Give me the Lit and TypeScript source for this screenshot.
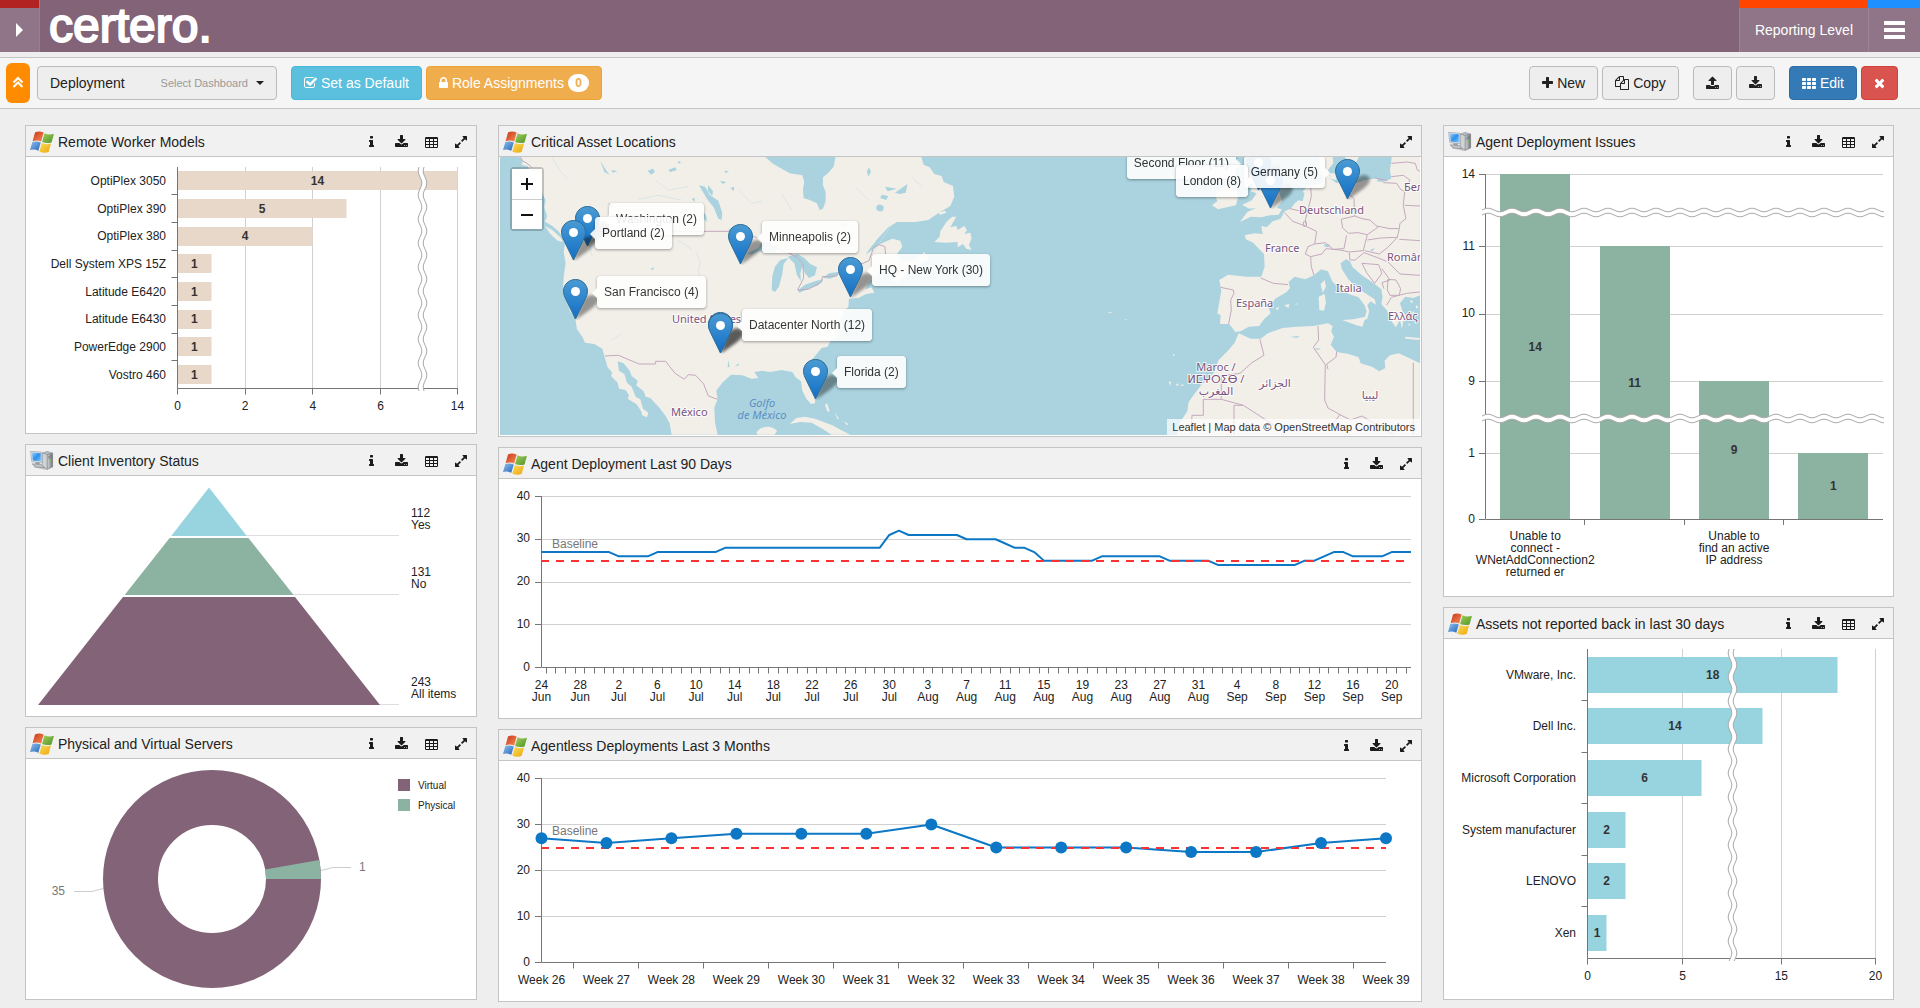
import { LitElement, html, svg, css, nothing } from "lit";
import { customElement, property } from "lit/decorators.js";

type Point = [number, number];

/* ---------- icons: [viewBox x, viewBox width, path] on a 1792 grid ---------- */
const ICONS: Record<string, [number, number, string]> = {
  plus: [192, 1408, "M1600 736v192q0 40-28 68t-68 28h-416v416q0 40-28 68t-68 28h-192q-40 0-68-28t-28-68v-416h-416q-40 0-68-28t-28-68v-192q0-40 28-68t68-28h416v-416q0-40 28-68t68-28h192q40 0 68 28t28 68v416h416q40 0 68 28t28 68z"],
  lock: [320, 1152, "M640 768h512v-192q0-106-75-181t-181-75-181 75-75 181v192zm832 96v576q0 40-28 68t-68 28h-960q-40 0-68-28t-28-68v-576q0-40 28-68t68-28h32v-192q0-184 132-316t316-132 316 132 132 316v192h32q40 0 68 28t28 68z"],
  close: [192, 1408, "M1490 1322q0 40-28 68l-136 136q-28 28-68 28t-68-28l-294-294-294 294q-28 28-68 28t-68-28l-136-136q-28-28-28-68t28-68l294-294-294-294q-28-28-28-68t28-68l136-136q28-28 68-28t68 28l294 294 294-294q28-28 68-28t68 28l136 136q28 28 28 68t-28 68l-294 294 294 294q28 28 28 68z"],
  info: [576, 640, "M1216 1344v128q0 26-19 45t-45 19h-512q-26 0-45-19t-19-45v-128q0-26 19-45t45-19h64v-384h-64q-26 0-45-19t-19-45v-128q0-26 19-45t45-19h384q26 0 45 19t19 45v576h64q26 0 45 19t19 45zm-128-1152v192q0 26-19 45t-45 19h-256q-26 0-45-19t-19-45v-192q0-26 19-45t45-19h256q26 0 45 19t19 45z"],
  download: [64, 1664, "M1344 1344q0-26-19-45t-45-19-45 19-19 45 19 45 45 19 45-19 19-45zm256 0q0-26-19-45t-45-19-45 19-19 45 19 45 45 19 45-19 19-45zm128-224v320q0 40-28 68t-68 28h-1472q-40 0-68-28t-28-68v-320q0-40 28-68t68-28h465l135 136q58 56 136 56t136-56l136-136h464q40 0 68 28t28 68zm-325-569q17 41-14 70l-448 448q-18 19-45 19t-45-19l-448-448q-31-29-14-70 17-39 59-39h256v-448q0-26 19-45t45-19h256q26 0 45 19t19 45v448h256q42 0 59 39z"],
  upload: [64, 1664, "M1344 1472q0-26-19-45t-45-19-45 19-19 45 19 45 45 19 45-19 19-45zm256 0q0-26-19-45t-45-19-45 19-19 45 19 45 45 19 45-19 19-45zm128-224v320q0 40-28 68t-68 28h-1472q-40 0-68-28t-28-68v-320q0-40 28-68t68-28h427q21 56 70.5 92t110.5 36h256q61 0 110.5-36t70.5-92h427q40 0 68 28t28 68zm-325-648q-17 40-59 40h-256v448q0 26-19 45t-45 19h-256q-26 0-45-19t-19-45v-448h-256q-42 0-59-40-17-39 14-69l448-448q18-19 45-19t45 19l448 448q31 30 14 69z"],
  table: [64, 1664, "M224 256h1344q160 0 160 160v1088q0 160-160 160h-1344q-160 0-160-160v-1088q0-160 160-160zM192 512v256h384v-256zM704 512v256h384v-256zM1216 512v256h384v-256zM192 896v256h384v-256zM704 896v256h384v-256zM1216 896v256h384v-256zM192 1280v256h384v-256zM704 1280v256h384v-256zM1216 1280v256h384v-256z"],
  grid: [0, 1792, "M96 256h320q96 0 96 96v192q0 96-96 96h-320q-96 0-96-96v-192q0-96 96-96zM736 256h320q96 0 96 96v192q0 96-96 96h-320q-96 0-96-96v-192q0-96 96-96zM1376 256h320q96 0 96 96v192q0 96-96 96h-320q-96 0-96-96v-192q0-96 96-96zM96 768h320q96 0 96 96v192q0 96-96 96h-320q-96 0-96-96v-192q0-96 96-96zM736 768h320q96 0 96 96v192q0 96-96 96h-320q-96 0-96-96v-192q0-96 96-96zM1376 768h320q96 0 96 96v192q0 96-96 96h-320q-96 0-96-96v-192q0-96 96-96zM96 1280h320q96 0 96 96v192q0 96-96 96h-320q-96 0-96-96v-192q0-96 96-96zM736 1280h320q96 0 96 96v192q0 96-96 96h-320q-96 0-96-96v-192q0-96 96-96zM1376 1280h320q96 0 96 96v192q0 96-96 96h-320q-96 0-96-96v-192q0-96 96-96z"],
  expand: [128, 1536, "M883 1056q0 13-10 23l-332 332 144 144q19 19 19 45t-19 45-45 19h-448q-26 0-45-19t-19-45v-448q0-26 19-45t45-19 45 19l144 144 332-332q10-10 23-10t23 10l114 114q10 10 10 23zm781-864v448q0 26-19 45t-45 19-45-19l-144-144-332 332q-10 10-23 10t-23-10l-114-114q-10-10-10-23t10-23l332-332-144-144q-19-19-19-45t19-45 45-19h448q26 0 45 19t19 45z"],
  check: [64, 1664, "M1472 930v318q0 119-84.5 203.5t-203.5 84.5h-832q-119 0-203.5-84.5t-84.5-203.5v-832q0-119 84.5-203.5t203.5-84.5h832q63 0 117 25 15 7 18 23 3 17-9 29l-49 49q-10 10-23 10-3 0-9-2-23-6-45-6h-832q-66 0-113 47t-47 113v832q0 66 47 113t113 47h832q66 0 113-47t47-113v-254q0-13 9-22l64-64q10-10 23-10 6 0 12 3 20 8 20 29zm231-489l-814 814q-24 24-57 24t-57-24l-430-430q-24-24-24-57t24-57l110-110q24-24 57-24t57 24l263 263 647-647q24-24 57-24t57 24l110 110q24 24 24 57t-24 57z"],
  copy: [0, 1792, "M1696 384q40 0 68 28t28 68v1216q0 40-28 68t-68 28h-960q-40 0-68-28t-28-68v-288h-544q-40 0-68-28t-28-68v-672q0-40 20-88t48-76l408-408q28-28 76-48t88-20h416q40 0 68 28t28 68v328q68-40 128-40h416zm-544 213l-299 299h299v-299zm-640-384l-299 299h299v-299zm196 647l316-316v-416h-384v416q0 40-28 68t-68 28h-416v640h512v-256q0-40 20-88t48-76zm956 804v-1152h-384v416q0 40-28 68t-68 28h-416v640h896z"],
};

const icon = (name: string, size = 14) => {
  const [x, w, d] = ICONS[name];
  return html`<svg aria-hidden="true" height=${size} width=${Math.round((w * size) / 1792)} viewBox="${x} 0 ${w} 1792">
    <path d=${d} fill="currentColor" fill-rule="evenodd"></path>
  </svg>`;
};

const windowsLogo = html`<svg aria-hidden="true" width="24" height="22" viewBox="0 0 24 22">
  <defs>
    <linearGradient id="r" x2="1" y2="1"><stop stop-color="#c8371b" /><stop offset="1" stop-color="#f58a54" /></linearGradient>
    <linearGradient id="g" x2="1" y2="1"><stop stop-color="#a3cf5c" /><stop offset="1" stop-color="#4f9427" /></linearGradient>
    <linearGradient id="b" x2="1" y2="1"><stop stop-color="#8fc0ee" /><stop offset="1" stop-color="#2767b8" /></linearGradient>
    <linearGradient id="y" x2="1" y2="1"><stop stop-color="#f9dc5a" /><stop offset="1" stop-color="#eda70c" /></linearGradient>
  </defs>
  <path fill="url(#r)" d="M5 1.5Q9-.7 13.6 1.6L11.2 10.6Q7 8.6 2.6 10.2z" />
  <path fill="url(#g)" d="M14.5 2.3Q19 4.6 24 2.8L21.5 11.4Q17 12.8 12.1 11z" />
  <path fill="url(#b)" d="M2.3 11.1Q6.5 9.6 10.8 11.6L8.3 19.8Q4.5 17.8 0 19z" />
  <path fill="url(#y)" d="M11.9 12.1Q16 14 21 12.6L18.6 21Q14 22.6 9.3 20.5z" />
</svg>`;

const computerLogo = html`<svg aria-hidden="true" width="24" height="22" viewBox="0 0 24 22">
  <defs>
    <linearGradient id="s" x2="1" y2="1"><stop stop-color="#9bd0fa" /><stop offset=".5" stop-color="#2f8fea" /><stop offset="1" stop-color="#7cc4f8" /></linearGradient>
    <linearGradient id="t" x2="1"><stop stop-color="#d5d8da" /><stop offset=".5" stop-color="#a5a9ac" /><stop offset="1" stop-color="#6b6f73" /></linearGradient>
  </defs>
  <path fill="#777" opacity=".35" d="M3 17l13 3 7-2.500v-2z" />
  <path fill="#b9bdc1" stroke="#8b9095" stroke-width=".6" d="M12.300 3L17 1.400 22.500 3 17.500 4.400z" />
  <path fill="#d0d3d6" stroke="#8b9095" stroke-width=".6" d="M12.300 3.200L17.300 4.600V19.200L12.300 16.600z" />
  <path fill="url(#t)" stroke="#74787c" stroke-width=".6" d="M17.300 4.600L22.600 3.200V16.600L17.300 19.200z" />
  <path fill="none" stroke="#5f6468" stroke-width=".7" d="M18.200 6.500l3.400-.9M18.200 8.300l3.400-.9" />
  <circle cx="20" cy="10.500" r=".9" fill="#6fd03a" />
  <path fill="#e3e6e9" stroke="#8f959a" stroke-width=".6" d="M.6 1.400L11.800 2.200V12.800L1.800 11.600z" />
  <path fill="url(#s)" d="M1.800 2.600l9 .6v8.300L2.800 10.600z" />
  <path fill="#9aa0a5" d="M5 12.200h4l1.300 2H5.600z" />
  <path fill="#c0c4c8" stroke="#7d8287" stroke-width=".6" d="M2.200 13.800l9.200.9 3.400 3.100-9.800-.8z" />
</svg>`;

/* ---------- dashboard panel ---------- */
@customElement("widget-card")
class WidgetCard extends LitElement {
  @property() heading = "";
  @property() logo = "windows";
  @property({ type: Array }) actions: string[] = ["info", "download", "table", "expand"];

  static styles = css`
    :host { display: block; background: #fff; border: 1px solid #c4c4c4; }
    .head { display: flex; align-items: center; height: 28px; padding: 2px 0 0 4px; background: #f1f1f1; border-bottom: 1px solid #c4c4c4; }
    .head > svg { flex: none; }
    h2 { flex: 1; margin: 0 0 0 4px; font-size: 14px; font-weight: 400; line-height: 20px; white-space: nowrap; }
    button { display: flex; align-items: center; justify-content: center; width: 30px; height: 28px; padding: 0; border: 0; background: none; color: #1b1b1b; cursor: pointer; }
  `;

  render() {
    return html`
      <div class="head">
        ${this.logo === "windows" ? windowsLogo : computerLogo}
        <h2>${this.heading}</h2>
        ${this.actions.map((a) => html`<button type="button" aria-label=${a}>${icon(a)}</button>`)}
      </div>
      <slot></slot>
    `;
  }
}

/* ---------- chart helpers ---------- */
const scale = (stops: Point[]) => (v: number) => {
  let i = 1;
  while (i < stops.length - 1 && v > stops[i][0]) i++;
  const [v0, p0] = stops[i - 1];
  const [v1, p1] = stops[i];
  return p0 + ((v - v0) / (v1 - v0)) * (p1 - p0);
};

const crisp = (n: number) => Math.floor(n) + 0.5;

/* Two parallel wavy lines with a blank ribbon between them, marking an axis break. */
const axisBreak = (from: number, to: number, at: number, peak: number, vertical: boolean) => {
  const wave = (offset: number): Point[] => {
    const pts: Point[] = [];
    for (let t = from; t <= to; t += 2) {
      const d = at + offset - 1.8 * Math.cos((2 * Math.PI * (t - peak)) / 24);
      pts.push(vertical ? [d, t] : [t, d]);
    }
    return pts;
  };
  const a = wave(0);
  const b = wave(5);
  return svg`
    <polygon points=${[...a, ...[...b].reverse()].join(" ")} fill="#fff"></polygon>
    <polyline points=${a.join(" ")} class="wave"></polyline>
    <polyline points=${b.join(" ")} class="wave"></polyline>`;
};

interface BarSpec {
  height: number;
  bottom: number;
  bar: number;
  color: string;
  stops: Point[];
  ticks: number[];
  breakAt: number;
  rows: [string, number][];
}

const horizontalBars = (s: BarSpec, width: number, label: string) => {
  const x = scale(s.stops);
  const x0 = s.stops[0][1];
  const top = 10;
  const step = (s.bottom - top) / s.rows.length;
  const end = x(s.ticks[s.ticks.length - 1]);
  return html`<svg class="chart" role="img" aria-label=${label} viewBox="0 0 ${width} ${s.height}">
    ${s.ticks.slice(1).map((t) => svg`<path class="grid" d="M${crisp(x(t))} ${top}V${s.bottom}"></path>`)}
    ${s.rows.map(([, v], i) => svg`<rect x=${x0} y=${Math.round(top + step * (i + 0.5) - s.bar / 2)} width=${Math.round(x(v) - x0)} height=${s.bar} fill=${s.color}></rect>`)}
    <path class="axis" d="M${x0} ${top}V${s.bottom}H${end + 0.5}"></path>
    ${s.ticks.map((t) => svg`<path class="axis" d="M${crisp(x(t))} ${s.bottom}v6"></path><text class="mid" x=${x(t)} y=${s.bottom + 21.5}>${t}</text>`)}
    ${s.rows.slice(1).map((_, i) => svg`<path class="axis" d="M${x0} ${crisp(top + step * (i + 1))}h-6"></path>`)}
    ${axisBreak(top, s.bottom + 4, s.breakAt, 14, true)}
    ${s.rows.map(([name, v], i) => {
      const y = Math.round(top + step * (i + 0.5)) + 4;
      return svg`<text class="end" x=${x0 - 11.5} y=${y}>${name}</text><text class="value" x=${(x0 + x(v)) / 2} y=${y}>${v}</text>`;
    })}
  </svg>`;
};

const MODELS: BarSpec = {
  height: 276, bottom: 231.5, bar: 19, color: "#e8d8c9", breakAt: 394,
  stops: [[0, 151.5], [6, 354.5], [14, 431.5]],
  ticks: [0, 2, 4, 6, 14],
  rows: [["OptiPlex 3050", 14], ["OptiPlex 390", 5], ["OptiPlex 380", 4], ["Dell System XPS 15Z", 1], ["Latitude E6420", 1], ["Latitude E6430", 1], ["PowerEdge 2900", 1], ["Vostro 460", 1]],
};

const ASSETS: BarSpec = {
  height: 360, bottom: 319.5, bar: 36, color: "#98d3e0", breakAt: 286,
  stops: [[0, 143.5], [6, 257.5], [14, 318.5], [20, 431.5]],
  ticks: [0, 5, 15, 20],
  rows: [["VMware, Inc.", 18], ["Dell Inc.", 14], ["Microsoft Corporation", 6], ["System manufacturer", 2], ["LENOVO", 2], ["Xen", 1]],
};

const issuesChart = () => {
  const y = scale([[0, 362.5], [1, 296.5], [9, 224.5], [11, 89.5], [14, 17.5]]);
  const bars: [number, string[]][] = [
    [14, ["Unable to", "connect -", "WNetAddConnection2", "returned er"]],
    [11, []],
    [9, ["Unable to", "find an active", "IP address"]],
    [1, []],
  ];
  const x = (i: number) => 41.5 + 99.4 * (i + 0.5);
  return html`<svg class="chart" role="img" aria-label="Agent Deployment Issues" viewBox="0 0 449 439">
    ${[14, 11, 10, 9, 1].map((v) => svg`<path class="grid" d="M41 ${crisp(y(v))}H439"></path>`)}
    ${bars.map(([v], i) => svg`<rect x=${Math.round(x(i) - 35)} y=${Math.floor(y(v))} width="70" height=${362 - Math.floor(y(v))} fill="#8cb2a1"></rect>`)}
    <path class="axis" d="M41.5 17V362.5H439"></path>
    ${[14, 11, 10, 9, 1, 0].map((v) => svg`<path class="axis" d="M35 ${crisp(y(v))}h6"></path><text class="end" x="31" y=${Math.round(y(v)) + 3}>${v}</text>`)}
    ${[1, 2, 3].map((i) => svg`<path class="axis" d="M${crisp(x(i) - 49.7)} 362v6"></path>`)}
    ${axisBreak(38, 440, 53, 44, false)}
    ${axisBreak(38, 440, 259, 44, false)}
    ${bars.map(([v, lines], i) => svg`
      <text class="value" x=${x(i)} y=${Math.round((y(v) + 362) / 2) + 4}>${v}</text>
      ${lines.map((l, n) => svg`<text class="mid" x=${x(i)} y=${383 + 12 * n}>${l}</text>`)}`)}
  </svg>`;
};

const DAILY: Point[] = [
  [0, 27], [7, 27], [8, 26], [11, 26], [12, 27], [18, 27], [19, 28], [35, 28], [36, 31], [37, 32], [38, 31], [43, 31],
  [44, 30], [47, 30], [48, 29], [49, 28], [50, 28], [51, 27], [52, 25], [57, 25], [58, 26], [64, 26], [65, 25], [69, 25],
  [70, 24], [78, 24], [79, 25], [80, 25], [81, 26], [82, 27], [83, 27], [84, 26], [87, 26], [88, 27], [90, 27],
];
const WEEKLY = [27, 26, 27, 28, 28, 28, 30, 25, 25, 25, 24, 24, 26, 27];

interface LineSpec {
  label: string;
  height: number;
  bottom: number;
  right: number;
  count: number;
  points: Point[];
  dots: boolean;
  names: [number, string[]][];
}

const lineChart = (s: LineSpec) => {
  const y = scale([[0, s.bottom], [40, 17.5]]);
  const step = (s.right - 42.5) / (s.count - 1);
  const x = (i: number) => 42.5 + step * i;
  return html`<svg class="chart" role="img" aria-label=${s.label} viewBox="0 0 922 ${s.height}">
    ${[10, 20, 30, 40].map((v) => svg`<path class="grid" d="M42 ${crisp(y(v))}H${s.right}"></path>`)}
    <path class="axis" d="M42.5 17V${s.bottom}H${s.right}"></path>
    ${[0, 10, 20, 30, 40].map((v) => svg`<path class="axis" d="M36 ${crisp(y(v))}h6"></path><text class="end" x="31" y=${Math.round(y(v)) + 3}>${v}</text>`)}
    ${Array.from({ length: s.count - 1 }, (_, i) => svg`<path class="axis" d="M${crisp(x(i + 0.5))} ${s.bottom}v6"></path>`)}
    <text class="note" x="53" y=${Math.round(y(25)) - 13}>Baseline</text>
    <polyline class="series" points=${s.points.map(([i, v]) => [x(i), y(v)]).join(" ")}></polyline>
    <path class="baseline" d="M42 ${Math.round(y(25))}H${s.right}"></path>
    ${s.dots ? s.points.map(([i, v]) => svg`<circle cx=${x(i)} cy=${y(v)} r="6" fill="#0b77c5"></circle>`) : nothing}
    ${s.names.map(([i, lines]) => lines.map((l, n) => svg`<text class="mid" x=${x(i)} y=${s.bottom + 21.5 + 12 * n}>${l}</text>`))}
  </svg>`;
};

const dayNames = (): [number, string[]][] => {
  const out: [number, string[]][] = [];
  for (let i = 0; i <= 88; i += 4) {
    const d = 24 + i;
    if (d <= 30) out.push([i, [`${d}`, "Jun"]]);
    else if (d <= 61) out.push([i, [`${d - 30}`, "Jul"]]);
    else if (d <= 92) out.push([i, [`${d - 61}`, "Aug"]]);
    else out.push([i, [`${d - 92}`, "Sep"]]);
  }
  return out;
};

const pyramid = html`<svg class="chart" role="img" aria-label="Client Inventory Status" viewBox="0 0 450 240">
  <path class="leader" d="M220 59.5H373M267 118.5H373M353 228.5H373" />
  <path fill="#98d3e0" d="M183 11.5L220.8 60H145.2z" />
  <path fill="#8cb2a1" d="M143.6 62h78.8L267.6 119H98.6z" />
  <path fill="#826377" d="M97 121h172L354 229H12z" />
  <text x="385" y="41">112</text><text x="385" y="53">Yes</text>
  <text x="385" y="100">131</text><text x="385" y="112">No</text>
  <text x="385" y="210">243</text><text x="385" y="222">All items</text>
</svg>`;

const donut = () => {
  const a = (10 * Math.PI) / 180;
  const [c, s] = [Math.cos(a), Math.sin(a)];
  return html`<svg class="chart" role="img" aria-label="Physical and Virtual Servers" viewBox="0 0 450 240">
    <circle cx="186" cy="120" r="81.5" fill="none" stroke="#826377" stroke-width="55"></circle>
    <path fill="#8cb2a1" d="M240 120H295A109 109 0 0 0 ${186 + 109 * c} ${120 - 109 * s}L${186 + 54 * c} ${120 - 54 * s}A54 54 0 0 1 240 120z"></path>
    <path class="callout" d="M295 111.5L307 108.5H325M77 129.5L66 132.5H48"></path>
    <text class="note" x="333" y="112">1</text>
    <text class="note end" x="39" y="136">35</text>
    <rect x="372" y="20" width="12" height="12" fill="#826377"></rect>
    <rect x="372" y="40" width="12" height="12" fill="#8cb2a1"></rect>
    <text class="legend" x="392" y="30">Virtual</text>
    <text class="legend" x="392" y="50">Physical</text>
  </svg>`;
};

/* ---------- map ---------- */
const MAP_W = 920;
const MAP_H = 278;

interface Pin { x: number; y: number; label?: string; side: "left" | "right"; }
const PINS: Pin[] = [
  { x: 758, y: 33, label: "Second Floor (11)", side: "left" },
  { x: 847, y: 42, label: "Germany (5)", side: "left" },
  { x: 770, y: 51, label: "London (8)", side: "left" },
  { x: 87, y: 89, label: "Washington (2)", side: "right" },
  { x: 73, y: 103, label: "Portland (2)", side: "right" },
  { x: 240, y: 107, label: "Minneapolis (2)", side: "right" },
  { x: 350, y: 140, label: "HQ - New York (30)", side: "right" },
  { x: 75, y: 162, label: "San Francisco (4)", side: "right" },
  { x: 220, y: 195, label: "Datacenter North (12)", side: "right" },
  { x: 220, y: 196, side: "right" },
  { x: 315, y: 242, label: "Florida (2)", side: "right" },
];

const marker = html`<svg aria-hidden="true" width="41" height="41" viewBox="0 0 41 41">
  <defs>
    <linearGradient id="pin" x2="0" y2="1"><stop stop-color="#4a9bd3" /><stop offset="1" stop-color="#126fc6" /></linearGradient>
    <filter id="soft" x="-30%" y="-30%" width="160%" height="160%"><feGaussianBlur stdDeviation="1.6" /></filter>
  </defs>
  <path fill="#000" opacity=".38" filter="url(#soft)" d="M12.500 41L20 21Q28 13 34 18Q37 23 28 30z" />
  <path fill="url(#pin)" stroke="#2e6c97" d="M12.500.5C5.600.5.5 5.900.5 12.300C.5 15.200 1.700 18 3 20.600L12.500 40L22 20.600C23.300 18 24.500 15.200 24.500 12.300C24.500 5.900 19.400.5 12.500.5z" />
  <circle cx="12.500" cy="12.500" r="4.500" fill="#fff" />
</svg>`;

const world = html`<svg class="land" aria-hidden="true" viewBox="0 0 920 278">
  <g transform="translate(-5 -37) scale(.3333)">
    <path class="ground" d="M70 108L84 122 80 135 98 138 104 150 122 165 130 190 142 222 152 240 148 262 156 288 150 305 172 318 192 335 202 352 210 372 206 395 212 430 206 470 204 512 216 545 226 575 240 592 246 628 262 650 270 668 298 672 322 686 330 715 338 742 352 758 348 768 368 788 372 806 392 810 402 826 398 836 424 852 438 872 442 886 456 892 460 878 444 866 436 838 422 830 410 800 396 788 388 762 372 752 368 724 386 730 404 752 410 768 428 782 424 796 446 814 452 830 466 834 492 862 512 888 524 910 530 944H668L660 908 658 862 668 838 664 812 682 788 708 764 742 766 770 776 790 774 778 756 802 752 826 756 860 750 892 756 902 772 918 784 922 812 934 836 948 852 960 850 962 822 948 786 938 752 944 728 962 706 980 684 998 680 1006 664 1028 650 1034 628 1026 602 1040 596 1046 572 1060 562 1062 536 1090 534 1114 522 1138 518 1130 502 1112 508 1122 486 1150 462 1176 448 1206 442 1216 452 1192 480 1206 488 1232 466 1262 444 1300 416 1288 396 1262 420 1222 426 1206 402 1222 380 1216 362 1192 356 1156 372 1112 404 1124 386 1148 356 1180 322 1206 306 1262 306 1300 300 1332 278 1366 258 1378 230 1374 198 1346 186 1340 168 1318 162 1304 142 1286 134 1278 108H1022L1016 140 1000 158 984 172 984 196 992 216 992 244 984 266 974 270 966 250 944 240 926 234 924 206 928 186 922 166 884 160 852 142 832 130 808 108z" />
    <path class="ground" d="M1318 366L1334 350 1336 334 1356 304 1372 290 1384 290 1366 322 1384 318 1388 330 1408 318 1416 330 1408 342 1426 338 1430 354 1422 376 1430 390 1414 386 1404 372 1388 382 1388 366 1352 368zM1330 278l20-6 4 6-18 6zM150 318L172 330 196 352 204 366 188 362 166 342z" />
    <path class="ground" d="M884 912L904 894 930 890 960 896 986 906 1012 916 1038 930 1066 944H1010L982 926 950 908 916 906zM784 938q10-18 38-18 24 6 24 14l-8 10h-50z" />
    <path class="water" d="M790 384L800 366 822 368 848 384 838 400 812 396 790 394 770 404 756 400zM830 510L832 468 840 440 856 420 880 414 866 432 862 462 852 500 840 516zM878 410L908 402 928 414 946 432 966 442 960 466 942 474 930 460 922 440 916 460 918 484 906 466 898 430zM908 512L930 494 964 482 986 478 970 496 936 508 914 518zM984 474L1002 460 1028 456 1030 466 1006 476z" />
    <path class="water" d="M612 196l18 4 14 24 26 18 12 36-2 22-10-4-14-34-18-22zM640 196l14 18-2 14-14-16zM622 270l12 18 2 18-16-16zM590 236l10-2-2 12zM458 152l16-6 6 10-12 8zM520 150l20-8 6 8-20 6zM546 126l10-2v8zM350 150l18 4-16 4zM316 122l18 30 10 12-16-8zM674 182l20 4-10 6zM706 204l12-4-2 14zM688 152l14 2-10 6zM956 132l16-14 14 6-14 12zM1116 154l6-12 6 14-8 14zM1170 200l36 6-28 8zM1200 218l38-26-6 26-18 4zM1160 224l20 4-6 12-18-6zM1144 262a11 10 0 1 0 22 4a11 10 0 1 0-22-4zM1036 308l20 4-14 6zM700 330l16-12 8 10-14 10zM340 250l18 6-12 10zM402 284l20 4-12 6zM466 446l12-4-4 8zM700 720l4 20-6 2zM720 740l10-10 2 6z" />
    <path class="river" d="M112 170l34 60M170 108l26 46 22 22M80 140l20 30M560 240l-70-14-60 12M250 300l30 60 12 50M604 396l12 30-6 30 14 28M548 360l42 28M380 640l-30 20M1186 320l-60 90M480 180l40 30 60-10M730 210l40 40 30-6M860 220l30 50M1080 200l40 40M1250 170l30 30" />
    <path class="ground" d="M990 854l8 22 6-4-8-22zM1018 876l14 20-4 2zM1046 904l14 8-4 4zM104 122l20 8-6 14-14-8z" />
    <path class="border" d="M76 110L82 122 96 130 110 142M206 334H704L720 328 734 340 784 352 806 366 848 386 884 400 906 412 924 430 926 474 908 510 940 508 980 486 982 470 1024 468 1040 444 1104 430 1122 422 1136 382 1152 374 1170 380 1172 408M330 708L370 706 432 732H482V724H512L540 760 568 778 580 764 602 766 626 792 640 828 668 838" />
  </g>
  <g transform="translate(460 -37) scale(.3333)">
    <path class="ground" d="M900 108L866 120 872 150 862 176 880 190 872 214 890 220 876 240 858 250 846 254 868 266 888 264 862 276 840 306 872 290 904 292 930 286 956 284 966 268 950 264 966 244 958 216 936 196 926 150 912 108zM756 256L772 244 766 226 780 206 806 196 830 206 834 232 828 256 800 262 774 268z" />
    <path class="ground" d="M1076 108L1082 150 1092 186 1070 194 1044 198 1030 212 1020 238 1004 250 992 266 974 274 962 296 938 304 920 322 904 318 908 342 884 340 854 346 858 358 880 368 898 388 912 402 914 440 904 470 860 470 804 464 778 480 784 512 776 558 772 580 782 586 780 612 808 612 826 636 842 634 866 620 898 618 912 598 932 580 926 562 946 536 980 516 990 504 986 486 1004 470 1036 478 1062 466 1084 448 1104 454 1118 486 1142 504 1166 522 1196 532 1214 556 1220 574 1214 594 1204 606 1222 596 1228 572 1222 556 1232 544 1248 554 1244 538 1216 520 1184 498 1164 476 1146 448 1142 430 1158 418 1170 424 1178 442 1206 466 1244 492 1264 508 1268 530 1264 552 1282 572 1290 598 1308 622 1320 600 1326 626 1330 604 1344 596 1328 574 1320 550 1336 530 1360 534 1380 526V108H1296L1290 150 1294 176 1268 186 1250 184 1256 174 1216 180 1180 192 1148 184 1130 190 1112 176 1104 150 1120 130 1118 108z" />
    <path class="ground" d="M1146 600L1180 598 1216 590 1208 620 1190 616zM1076 530L1094 522 1098 548 1092 572 1078 570zM1082 492L1094 480 1098 500 1088 518zM946 566l12-6-4 10zM972 556l16-4-2 12zM1004 552l8-2v4zM1334 650l48 4-6 6-38-4zM1152 108h46l-12 24-20-6zM1108 160l24 0-4 20-16-4z" />
    <path class="ground" d="M836 640L872 656 902 656 924 640 968 624 1012 620 1060 618 1104 610 1118 618 1114 634 1122 650 1112 674 1130 696 1166 702 1196 712 1202 730 1236 740 1258 754 1276 744 1274 722 1290 706 1316 700 1342 712 1380 730V944H650L658 910 682 874 686 846 706 818 722 798 762 758 776 720 806 690 824 668zM626 784l8 2-4 12zM646 794l10-4-2 8zM660 798l10-6v6zM638 702l8 2-6 4zM440 578l14-2v4zM494 598l10 2h-10zM398 562l4 2zM720 792l4-2v8z" />
    <path class="ground" d="M1350 540l10 4-6 6zM1368 556l8 4-8 6zM1356 578l6-4 2 8zM1346 610l6 4-6 4z" />
    <path class="water" d="M1018 214l16 4-6 26-14-4zM1092 372l18 2-4 8-12-2zM990 650l30-2-10 6zM1064 684l20 2-12 4zM1230 390l14-6-6 10z" />
    <path class="border" d="M902 474L940 490 984 494M782 502L820 510 822 520 812 540 814 570 806 612M1052 198L1054 230 1044 270 1036 300 1040 320 1070 334 1064 372 1044 380 1036 402 1052 410 1054 440 1062 466M974 278L998 304 1036 318M990 266L1016 272 1040 274M1030 306l8-2 2 14-8 2zM1162 216L1182 236 1184 288 1144 298 1148 324 1166 340 1194 338 1222 344 1254 322 1230 300 1206 296 1184 288M1064 372L1096 368 1120 388 1152 386 1160 346M1052 410L1086 402 1098 386 1140 390 1168 396 1210 392 1222 344M1250 318L1290 326 1318 326 1312 352 1262 354 1222 360M1318 326L1320 310 1338 296 1330 256 1334 216 1320 206 1310 190 1270 188M1334 256L1380 258M1294 130L1340 126 1366 130 1372 150 1380 154M1294 170L1330 166 1350 180 1336 208M1312 352L1284 382 1258 402 1214 392M1318 358L1380 362M1168 398L1170 420 1186 420 1212 398 1250 412 1280 424M1206 430L1256 434 1266 460 1244 490 1220 458zM1266 446L1290 480 1266 488 1272 506M1282 424L1320 462 1380 466M1284 478L1308 480 1322 506 1318 526 1290 526 1282 510zM1280 556L1294 532 1340 520 1380 516M900 658L912 706 876 728 840 760 784 768V838H730V886H696L694 940M784 838L850 856 940 914M822 944V856H850M1074 618L1076 660 1060 682 1096 734 1094 840 1104 864 1140 884 1120 910M1130 696L1128 712 1100 732 1104 748M1140 884L1172 900 1206 888 1300 944M1360 728V944M1244 174l38 8" />
  </g>
  <g class="place">
    <text x="172" y="166">United States</text>
    <text x="171" y="259">México</text>
    <text x="799" y="57">Deutschland</text>
    <text x="765" y="95">France</text>
    <text x="736" y="150">España</text>
    <text x="836" y="135">Italia</text>
    <text x="888" y="163">Ελλάς</text>
    <text x="887" y="104">România</text>
    <text x="904" y="34">Беларусь</text>
    <g class="mid">
      <text x="716" y="214">Maroc /</text>
      <text x="716" y="226">ⵍⵎⵖⵔⵉⴱ /</text>
      <text x="716" y="238">المغرب</text>
      <text x="775" y="230">الجزائر</text>
      <text x="870" y="242">ليبيا</text>
      <text class="sea" x="262" y="250">Golfo</text>
      <text class="sea" x="262" y="262">de México</text>
    </g>
  </g>
</svg>`;

@customElement("app-root")
class AppRoot extends LitElement {
  static styles = css`
    :host { display: block; min-height: 100vh; background: #eee; color: #222; font-family: "Liberation Sans", Arial, sans-serif; font-size: 14px; line-height: 20px; }
    * { box-sizing: border-box; }
    button, select { font: inherit; cursor: pointer; }

    .top { display: flex; height: 52px; background: #826377; color: #fff; }
    .top button { border: 0 solid; border-top-width: 8px; background: #8f7587; color: #fff; display: flex; align-items: center; justify-content: center; padding: 0 15px 0 16px; }
    .top .toggle { width: 39px; padding: 0; border-top-color: #b22222; }
    .brand { flex: 1; padding-left: 9px; border-left: 1px solid #977f90; font-size: 48px; line-height: 52px; -webkit-text-stroke: 2px #fff; color: #fff; text-decoration: none; }
    .top .level { border-top-color: #ff4500; box-shadow: inset 1px 0 #9c8495; }
    .top .menu { width: 52px; border-top-color: #1e90ff; box-shadow: inset 1px 0 #9c8495; }

    .bar { display: flex; align-items: center; gap: 4px; height: 52px; margin-top: 5px; padding: 0 22px 0 6px; background: #f5f5f5; border: 1px solid #c4c4c4; border-width: 1px 0; }
    .up { width: 24px; height: 40px; padding: 0; border: 0; border-radius: 6px; background: #ff8c00; color: #fff; }
    .picker { display: flex; align-items: center; width: 240px; height: 34px; margin: 0 10px 0 3px; padding: 0 12px; border: 1px solid #bbb; border-radius: 4px; background: #eee; }
    .picker select { flex: 1; min-width: 0; padding: 0; border: 0; background: none; color: #222; appearance: none; }
    .picker label { margin-right: 8px; color: #999; font-size: 11px; }
    .btn { display: inline-flex; align-items: center; gap: 4px; height: 34px; padding: 0 12px; border: 1px solid #bbb; border-radius: 4px; background: #eee; color: #222; white-space: nowrap; }
    .btn.info { background: #5bc0de; border-color: #46b8da; color: #fff; }
    .btn.warn { background: #f0ad4e; border-color: #eea236; color: #fff; }
    .btn.primary { background: #337ab7; border-color: #2e6da4; color: #fff; }
    .btn.danger { background: #d9534f; border-color: #d43f3a; color: #fff; }
    .badge { min-width: 21px; border-radius: 10px; background: #fff; color: #f0ad4e; font-size: 12px; font-weight: 700; line-height: 18px; text-align: center; }
    .gap { margin-right: 10px; }
    .spacer { flex: 1; }

    .board { display: grid; grid-template-columns: 452fr 924fr 451fr; gap: 21px; align-items: start; padding: 16px 26px 0 25px; }
    .col { display: flex; flex-direction: column; gap: 10px; min-width: 0; }

    .chart { display: block; width: 100%; font-size: 12px; fill: #222; }
    .chart .grid { stroke: #d0d0d0; fill: none; }
    .chart .axis { stroke: #757575; fill: none; }
    .chart .wave { stroke: #aaa; fill: none; }
    .chart .leader { stroke: #ddd; }
    .chart .callout { stroke: #ccc; fill: none; }
    .chart .series { fill: none; stroke: #0b77c5; stroke-width: 2; stroke-linejoin: round; }
    .chart .baseline { stroke: #fa3232; stroke-width: 2; stroke-dasharray: 8 7; }
    .chart .note { fill: #777; }
    .chart .legend { font-size: 10px; }
    .chart .value { font-weight: 700; fill: #333; text-anchor: middle; }
    .mid { text-anchor: middle; }
    .end { text-anchor: end; }

    .map { position: relative; margin: 0 1px 1px; overflow: hidden; background: #aad3df; font-size: 12px; line-height: 18px; }
    .land { display: block; width: 100%; }
    .ground { fill: #f2efe9; }
    .water { fill: #aad3df; }
    .river { fill: none; stroke: #cfe1e2; stroke-width: 2; }
    .border { fill: none; stroke: #c3a9bd; stroke-width: 3; stroke-linejoin: round; }
    .place { fill: #7a5480; stroke: #fffc; stroke-width: 2px; paint-order: stroke; font: 11px "Noto Sans", "DejaVu Sans", sans-serif; }
    .place .sea { fill: #5d8ec4; stroke: none; font-style: italic; font-size: 11px; }
    .pin { position: absolute; margin: -40px 0 0 -12px; line-height: 0; }
    .tip { position: absolute; margin-top: -43px; padding: 6px; border: 1px solid #fff; border-radius: 3px; background: #fff; color: #222; opacity: .9; box-shadow: 0 1px 3px rgba(0, 0, 0, .4); white-space: nowrap; }
    .tip::before { content: ""; position: absolute; top: 10px; border: 6px solid transparent; }
    .tip.right { margin-left: 22px; }
    .tip.right::before { left: -12px; border-right-color: #fff; }
    .tip.left { margin-right: 22px; }
    .tip.left::before { right: -12px; border-left-color: #fff; }
    .zoom { position: absolute; top: 10px; left: 10px; display: flex; flex-direction: column; border: 2px solid rgba(0, 0, 0, .2); border-radius: 4px; background-clip: padding-box; }
    .zoom button { display: flex; align-items: center; justify-content: center; width: 30px; height: 30px; padding: 0; border: 0; background: #fff; color: #111; }
    .zoom button + button { border-top: 1px solid #ccc; }
    .credit { position: absolute; right: 0; bottom: 0; padding: 0 5px; background: rgba(255, 255, 255, .7); color: #333; font-size: 11px; line-height: 16px; }
    .credit a { color: #333; text-decoration: none; }
  `;

  private map() {
    const top = (p: Pin) => `top:${(p.y / MAP_H) * 100}%`;
    return html`<div class="map">
      ${world}
      ${PINS.map((p) => html`<span class="pin" style="${top(p)};left:${(p.x / MAP_W) * 100}%">${marker}</span>`)}
      ${PINS.filter((p) => p.label).map((p) => html`<span class="tip ${p.side}" style="${top(p)};${p.side === "right" ? `left:${(p.x / MAP_W) * 100}%` : `right:${100 - (p.x / MAP_W) * 100}%`}">${p.label}</span>`)}
      <div class="zoom">
        <button type="button" aria-label="Zoom in"><svg width="12" height="12" viewBox="0 0 12 12"><path d="M0 6h12M6 0v12" stroke="currentColor" stroke-width="2" /></svg></button>
        <button type="button" aria-label="Zoom out"><svg width="12" height="12" viewBox="0 0 12 12"><path d="M0 6h12" stroke="currentColor" stroke-width="2" /></svg></button>
      </div>
      <div class="credit"><a href="#leaflet">Leaflet</a> | Map data © <a href="#osm">OpenStreetMap</a> Contributors</div>
    </div>`;
  }

  render() {
    return html`
      <header class="top">
        <button class="toggle" type="button" aria-label="Open navigation"><svg width="7" height="14" viewBox="0 0 7 14"><path d="M0 0l7 7-7 7z" fill="#fff" /></svg></button>
        <a class="brand" href="#home">certero.</a>
        <button class="level" type="button">Reporting Level</button>
        <button class="menu" type="button" aria-label="Menu"><svg width="21" height="18" viewBox="0 0 21 18"><path d="M1 2h19M1 9h19M1 16h19" stroke="#fff" stroke-width="4" stroke-linecap="round" /></svg></button>
      </header>

      <div class="bar">
        <button class="up" type="button" aria-label="Collapse toolbar"><svg width="12" height="12" viewBox="0 0 12 12"><path d="M1.500 6.500L6 2l4.500 4.500M1.500 11L6 6.500 10.500 11" fill="none" stroke="#fff" stroke-width="2" /></svg></button>
        <div class="picker">
          <select id="dashboard"><option>Deployment</option></select>
          <label for="dashboard">Select Dashboard</label>
          <svg aria-hidden="true" width="8" height="4" viewBox="0 0 8 4"><path d="M0 0h8L4 4z" fill="#222" /></svg>
        </div>
        <button class="btn info" type="button">${icon("check")}Set as Default</button>
        <button class="btn warn" type="button">${icon("lock")}Role Assignments<span class="badge">0</span></button>
        <span class="spacer"></span>
        <button class="btn" type="button">${icon("plus")}New</button>
        <button class="btn gap" type="button">${icon("copy")}Copy</button>
        <button class="btn" type="button" aria-label="Upload">${icon("upload")}</button>
        <button class="btn gap" type="button" aria-label="Download">${icon("download")}</button>
        <button class="btn primary" type="button">${icon("grid")}Edit</button>
        <button class="btn danger" type="button" aria-label="Delete">${icon("close")}</button>
      </div>

      <main class="board">
        <div class="col">
          <widget-card heading="Remote Worker Models">${horizontalBars(MODELS, 450, "Remote Worker Models")}</widget-card>
          <widget-card heading="Client Inventory Status" logo="computer">${pyramid}</widget-card>
          <widget-card heading="Physical and Virtual Servers">${donut()}</widget-card>
        </div>
        <div class="col">
          <widget-card heading="Critical Asset Locations" .actions=${["expand"]}>${this.map()}</widget-card>
          <widget-card heading="Agent Deployment Last 90 Days" .actions=${["info", "download", "expand"]}>
            ${lineChart({ label: "Agent Deployment Last 90 Days", height: 239, bottom: 188.5, right: 912, count: 91, points: DAILY, dots: false, names: dayNames() })}
          </widget-card>
          <widget-card heading="Agentless Deployments Last 3 Months" .actions=${["info", "download", "expand"]}>
            ${lineChart({ label: "Agentless Deployments Last 3 Months", height: 240, bottom: 201.5, right: 887, count: 14, points: WEEKLY.map((v, i): Point => [i, v]), dots: true, names: WEEKLY.map((_, i): [number, string[]] => [i, [`Week ${26 + i}`]]) })}
          </widget-card>
        </div>
        <div class="col">
          <widget-card heading="Agent Deployment Issues" logo="computer">${issuesChart()}</widget-card>
          <widget-card heading="Assets not reported back in last 30 days">${horizontalBars(ASSETS, 449, "Assets not reported back in last 30 days")}</widget-card>
        </div>
      </main>
    `;
  }
}
